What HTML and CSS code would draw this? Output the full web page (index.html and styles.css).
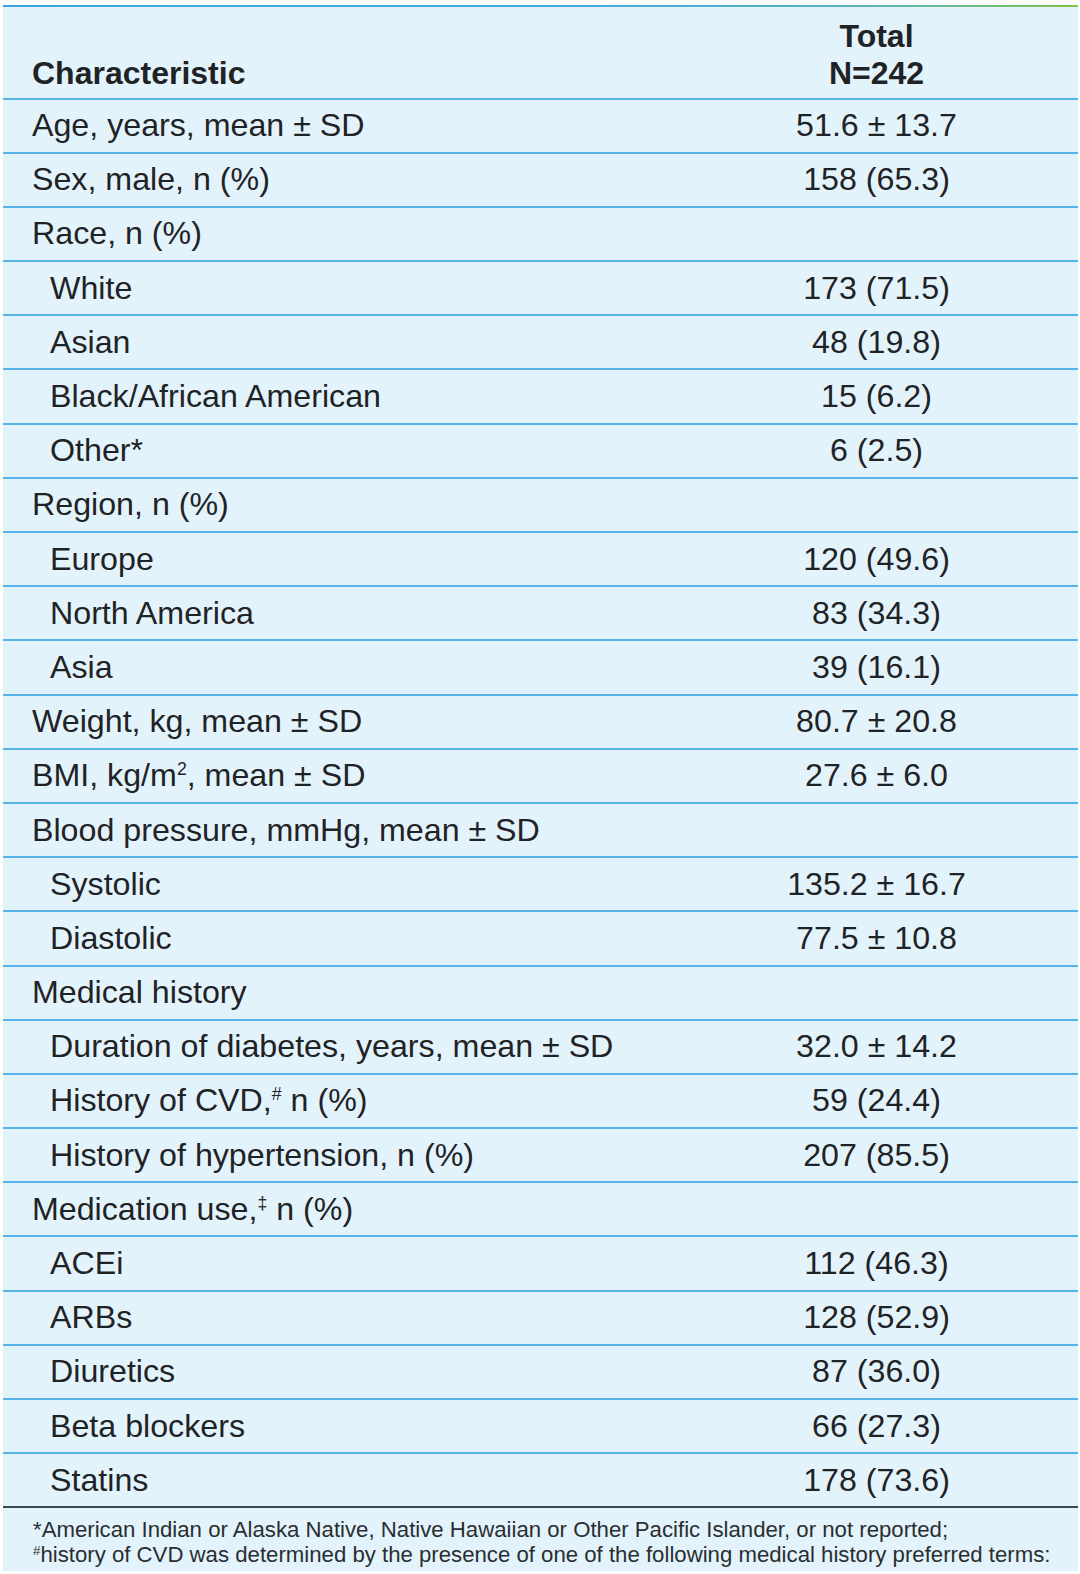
FILE: index.html
```html
<!DOCTYPE html>
<html lang="en">
<head>
<meta charset="utf-8">
<title>Baseline characteristics</title>
<link rel="stylesheet" href="styles.css">
</head>
<body>
<div class="panel">
  <div class="topline"></div>
  <div class="row head">
    <div class="cell label">Characteristic</div>
    <div class="cell value">Total<br>N=242</div>
  </div>
  <div class="row"><div class="cell label">Age, years, mean ± SD</div><div class="cell value">51.6 ± 13.7</div></div>
  <div class="row"><div class="cell label">Sex, male, n (%)</div><div class="cell value">158 (65.3)</div></div>
  <div class="row"><div class="cell label">Race, n (%)</div><div class="cell value"></div></div>
  <div class="row"><div class="cell label sub">White</div><div class="cell value">173 (71.5)</div></div>
  <div class="row"><div class="cell label sub">Asian</div><div class="cell value">48 (19.8)</div></div>
  <div class="row"><div class="cell label sub">Black/African American</div><div class="cell value">15 (6.2)</div></div>
  <div class="row"><div class="cell label sub">Other*</div><div class="cell value">6 (2.5)</div></div>
  <div class="row"><div class="cell label">Region, n (%)</div><div class="cell value"></div></div>
  <div class="row"><div class="cell label sub">Europe</div><div class="cell value">120 (49.6)</div></div>
  <div class="row"><div class="cell label sub">North America</div><div class="cell value">83 (34.3)</div></div>
  <div class="row"><div class="cell label sub">Asia</div><div class="cell value">39 (16.1)</div></div>
  <div class="row"><div class="cell label">Weight, kg, mean ± SD</div><div class="cell value">80.7 ± 20.8</div></div>
  <div class="row"><div class="cell label">BMI, kg/m<sup class="sup">2</sup>, mean ± SD</div><div class="cell value">27.6 ± 6.0</div></div>
  <div class="row"><div class="cell label">Blood pressure, mmHg, mean ± SD</div><div class="cell value"></div></div>
  <div class="row"><div class="cell label sub">Systolic</div><div class="cell value">135.2 ± 16.7</div></div>
  <div class="row"><div class="cell label sub">Diastolic</div><div class="cell value">77.5 ± 10.8</div></div>
  <div class="row"><div class="cell label">Medical history</div><div class="cell value"></div></div>
  <div class="row"><div class="cell label sub">Duration of diabetes, years, mean ± SD</div><div class="cell value">32.0 ± 14.2</div></div>
  <div class="row"><div class="cell label sub">History of CVD,<sup class="sup">#</sup> n (%)</div><div class="cell value">59 (24.4)</div></div>
  <div class="row"><div class="cell label sub">History of hypertension, n (%)</div><div class="cell value">207 (85.5)</div></div>
  <div class="row"><div class="cell label">Medication use,<sup class="sup">‡</sup> n (%)</div><div class="cell value"></div></div>
  <div class="row"><div class="cell label sub">ACEi</div><div class="cell value">112 (46.3)</div></div>
  <div class="row"><div class="cell label sub">ARBs</div><div class="cell value">128 (52.9)</div></div>
  <div class="row"><div class="cell label sub">Diuretics</div><div class="cell value">87 (36.0)</div></div>
  <div class="row"><div class="cell label sub">Beta blockers</div><div class="cell value">66 (27.3)</div></div>
  <div class="row last"><div class="cell label sub">Statins</div><div class="cell value">178 (73.6)</div></div>
  <div class="notes">
    <p class="note">*American Indian or Alaska Native, Native Hawaiian or Other Pacific Islander, or not reported;</p>
    <p class="note"><sup class="nsup">#</sup>history of CVD was determined by the presence of one of the following medical history preferred terms:</p>
  </div>
</div>
</body>
</html>
```
FILE: styles.css
```css
html, body {
  margin: 0;
  padding: 0;
  background: #ffffff;
}
body {
  font-family: "Liberation Sans", Arial, sans-serif;
  color: #1f2326;
}
.panel {
  margin: 5px 2px 0 3px;
  width: 1075px;
  height: 1566px;
  background: #e3f3fb;
  display: flex;
  flex-direction: column;
  overflow: hidden;
}
.topline {
  flex: none;
  height: 2px;
  background: linear-gradient(to right, #3aa7e4 0%, #3fa9e3 50%, #58b6bb 80%, #80c34a 100%);
}
.row {
  flex: none;
  display: grid;
  grid-template-columns: 672px 1fr;
  height: 52.2px;
  border-bottom: 2px solid #56b5e6;
  align-items: center;
  font-size: 32.2px;
}
.row.head {
  height: 90.5px;
  align-items: end;
  font-weight: bold;
  font-size: 32px;
  line-height: 37px;
}
.row.head .cell {
  padding-bottom: 6px;
}
.row.last {
  border-bottom-color: #3b4a52;
}
.cell.label {
  padding-left: 29px;
  white-space: nowrap;
}
.cell.label.sub {
  padding-left: 47px;
}
.cell.value {
  text-align: center;
  white-space: nowrap;
}
.sup {
  font-size: 0.55em;
  vertical-align: 0.6em;
  line-height: 0;
}
.notes {
  flex: none;
  padding: 9px 0 0 30px;
}
.note {
  margin: 0;
  font-family: "Liberation Sans", Arial, sans-serif;
  font-size: 22.2px;
  line-height: 25px;
  color: #2a2e31;
  white-space: nowrap;
}
.nsup {
  font-size: 0.6em;
  vertical-align: 0.5em;
  line-height: 0;
}
```
